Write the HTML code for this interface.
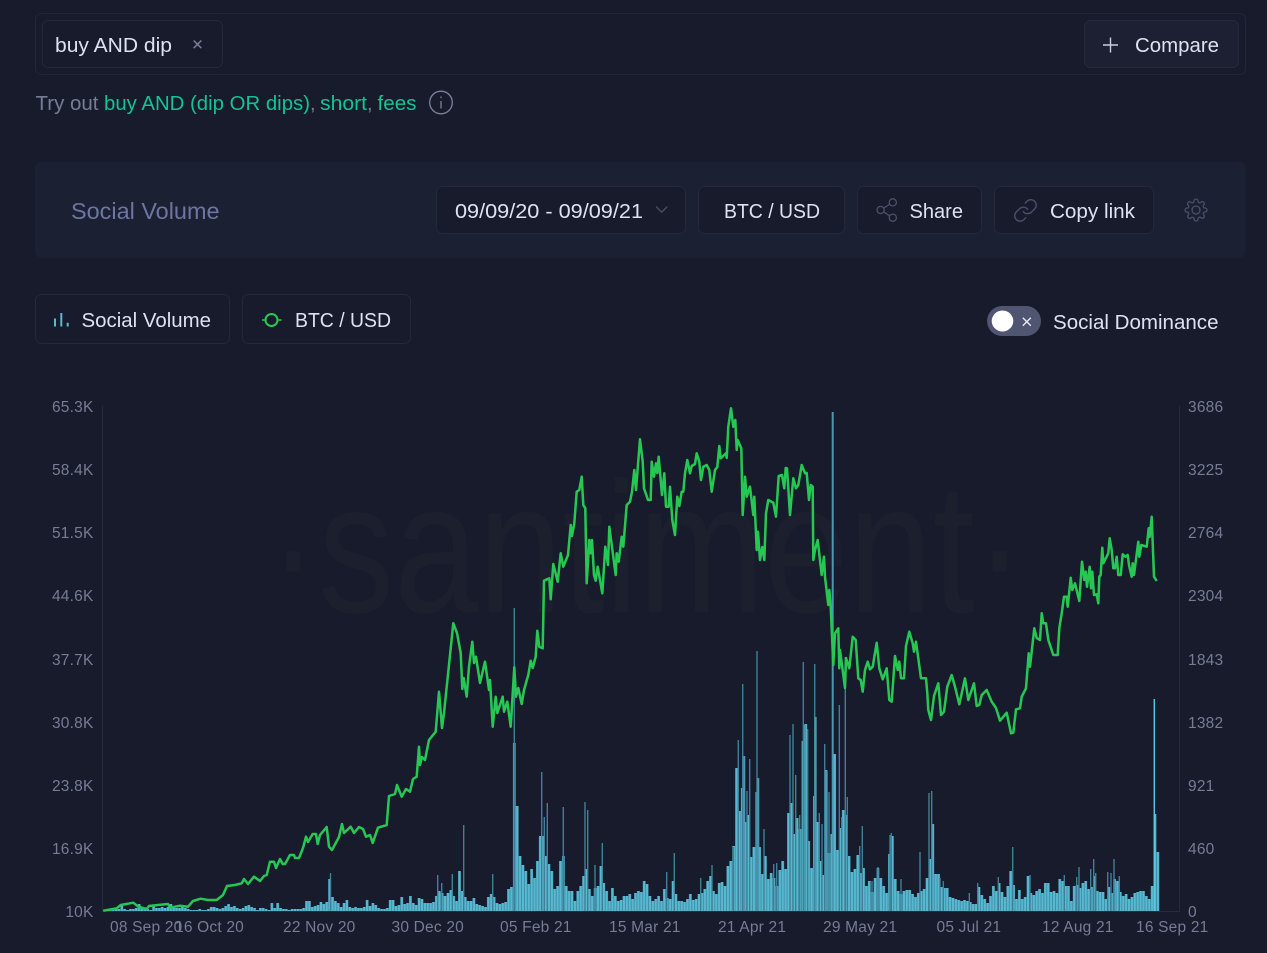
<!DOCTYPE html>
<html lang="en">
<head>
<meta charset="utf-8">
<title>Social Volume</title>
<style>
html,body{margin:0;padding:0;background:#181b2b;width:1267px;height:953px;overflow:hidden}
svg{display:block;position:absolute;left:0;top:0}
text{font-family:"Liberation Sans",Arial,sans-serif}
.t{font-size:20px;fill:#dde2f1}
.g{font-size:20px;fill:#767d97}
.j{font-size:20px;fill:#14c393}
.a{font-size:15.5px;fill:#767c95}
.box{fill:#181b2b;stroke:#24283b;stroke-width:1}
.ic{fill:none;stroke:#4b5069;stroke-width:1.3;stroke-linecap:round;stroke-linejoin:round}
</style>
</head>
<body>
<svg width="1267" height="953" viewBox="0 0 1267 953" xmlns="http://www.w3.org/2000/svg">
<rect width="1267" height="953" fill="#181b2b"/>

<!-- search -->
<rect x="35.5" y="13.5" width="1210" height="61" rx="6" fill="none" stroke="#222637"/>
<rect class="box" x="42.5" y="20.5" width="180" height="47" rx="6"/>
<text class="t" x="55" y="52" textLength="117" lengthAdjust="spacingAndGlyphs">buy AND dip</text>
<path d="M193.7 40.5l7.6 7.6M201.3 40.5l-7.6 7.6" fill="none" stroke="#7d829b" stroke-width="1.5"/>
<rect x="1084.5" y="20.5" width="154" height="47" rx="6" fill="#1c2032" stroke="#25293c"/>
<path d="M1103 45h15M1110.5 37.5v15" fill="none" stroke="#c9cee0" stroke-width="1.4"/>
<text class="t" x="1135" y="52" textLength="84" lengthAdjust="spacingAndGlyphs">Compare</text>

<text class="g" x="35.5" y="110" textLength="63" lengthAdjust="spacingAndGlyphs">Try out</text>
<text class="j" x="104" y="110" textLength="206" lengthAdjust="spacingAndGlyphs">buy AND (dip OR dips)</text>
<text class="g" x="310" y="110">,</text>
<text class="j" x="320" y="110" textLength="47" lengthAdjust="spacingAndGlyphs">short</text>
<text class="g" x="367" y="110">,</text>
<text class="j" x="377.5" y="110" textLength="39" lengthAdjust="spacingAndGlyphs">fees</text>
<circle cx="441" cy="102.5" r="11.3" fill="none" stroke="#7d829b" stroke-width="1.3"/>
<path d="M441 101v7.5M441 96.5v1.6" fill="none" stroke="#7d829b" stroke-width="1.3"/>

<!-- header card -->
<rect x="35" y="162" width="1210.5" height="95.5" rx="6" fill="#1c2033"/>
<text x="71" y="219" font-size="23" fill="#6c76a0" textLength="148.5" lengthAdjust="spacingAndGlyphs">Social Volume</text>
<rect class="box" x="436.5" y="186.5" width="249" height="47" rx="6"/>
<text class="t" x="455" y="218" textLength="188" lengthAdjust="spacingAndGlyphs">09/09/20 - 09/09/21</text>
<path d="M656.5 207l5.2 5.2 5.2-5.2" class="ic"/>
<rect class="box" x="698.5" y="186.5" width="146" height="47" rx="6"/>
<text class="t" x="724" y="218" textLength="96" lengthAdjust="spacingAndGlyphs">BTC / USD</text>
<rect class="box" x="857.5" y="186.5" width="124" height="47" rx="6"/>
<g class="ic">
<circle cx="892.8" cy="202.4" r="3.6"/><circle cx="880.6" cy="210" r="3.6"/><circle cx="892.8" cy="217.7" r="3.6"/>
<path d="M883.7 208.1l6-3.8M883.7 211.9l6 3.9"/>
</g>
<text class="t" x="909.5" y="218" textLength="53.5" lengthAdjust="spacingAndGlyphs">Share</text>
<rect class="box" x="994.5" y="186.5" width="159" height="47" rx="6"/>
<g class="ic" transform="translate(1012.5 197.5) scale(1.08)">
<path d="M10 13a5 5 0 0 0 7.54.54l3-3a5 5 0 0 0-7.07-7.07l-1.72 1.71"/>
<path d="M14 11a5 5 0 0 0-7.54-.54l-3 3a5 5 0 0 0 7.07 7.07l1.71-1.71"/>
</g>
<text class="t" x="1050" y="218" textLength="85" lengthAdjust="spacingAndGlyphs">Copy link</text>
<g class="ic" transform="translate(1184 198)">
<circle cx="12" cy="12" r="4"/>
<path d="M19.4 15a1.65 1.65 0 0 0 .33 1.82l.06.06a2 2 0 0 1 0 2.83 2 2 0 0 1-2.83 0l-.06-.06a1.65 1.65 0 0 0-1.82-.33 1.65 1.65 0 0 0-1 1.51V21a2 2 0 0 1-2 2 2 2 0 0 1-2-2v-.09A1.65 1.65 0 0 0 9 19.4a1.65 1.65 0 0 0-1.82.33l-.06.06a2 2 0 0 1-2.83 0 2 2 0 0 1 0-2.83l.06-.06a1.65 1.65 0 0 0 .33-1.82 1.65 1.65 0 0 0-1.51-1H3a2 2 0 0 1-2-2 2 2 0 0 1 2-2h.09A1.65 1.65 0 0 0 4.6 9a1.65 1.65 0 0 0-.33-1.82l-.06-.06a2 2 0 0 1 0-2.83 2 2 0 0 1 2.83 0l.06.06a1.65 1.65 0 0 0 1.82.33H9a1.65 1.65 0 0 0 1-1.51V3a2 2 0 0 1 2-2 2 2 0 0 1 2 2v.09a1.65 1.65 0 0 0 1 1.51 1.65 1.65 0 0 0 1.82-.33l.06-.06a2 2 0 0 1 2.83 0 2 2 0 0 1 0 2.83l-.06.06a1.65 1.65 0 0 0-.33 1.82V9a1.65 1.65 0 0 0 1.51 1H21a2 2 0 0 1 2 2 2 2 0 0 1-2 2h-.09a1.65 1.65 0 0 0-1.51 1z"/>
</g>

<!-- legend -->
<rect class="box" x="35.5" y="294.5" width="194" height="49" rx="6"/>
<path d="M55 326.5v-8M61.3 326.5v-13.5M67.7 326.5v-3.7" fill="none" stroke="#5cb9d1" stroke-width="2"/>
<text class="t" x="81.5" y="327" textLength="129.5" lengthAdjust="spacingAndGlyphs">Social Volume</text>
<rect class="box" x="242.5" y="294.5" width="168" height="49" rx="6"/>
<circle cx="271.5" cy="320" r="6" fill="none" stroke="#26c953" stroke-width="2"/>
<path d="M262 320h3.5M278 320h3.5" stroke="#26c953" stroke-width="1.6"/>
<text class="t" x="295" y="327" textLength="96" lengthAdjust="spacingAndGlyphs">BTC / USD</text>
<rect x="987" y="306" width="54" height="30" rx="15" fill="#505572"/>
<ellipse cx="1002.5" cy="321" rx="10.8" ry="10.5" fill="#fff"/>
<path d="M1022.8 317.7l8 8M1030.8 317.7l-8 8" fill="none" stroke="#e6e8f2" stroke-width="1.4"/>
<text class="t" x="1053" y="329" textLength="165.5" lengthAdjust="spacingAndGlyphs">Social Dominance</text>

<!-- watermark -->
<text x="268" y="612" font-size="186" fill="#1b1f2e" textLength="757" lengthAdjust="spacingAndGlyphs">·santiment·</text>

<!-- axes -->
<path d="M102.5 406V911.5H1179.5V406" fill="none" stroke="#272b3e"/>

<!-- bars -->
<defs>
<path id="b" d="M0 0v1M1 0v1M2 0v2M3 0v1M4 0v2M5 0v2M6 0v5M7 0v2M8 0v1M9 0v2M10 0v2M11 0v3M12 0v7M13 0v4M14 0v2M15 0v2M16 0v1M17 0v5M18 0v3M19 0v3M20 0v4M21 0v3M22 0v4M23 0v7M24 0v3M25 0v3M26 0v3M27 0v4M28 0v3M29 0v2M30 0v1M31 0v1M32 0v1M33 0v2M34 0v1M35 0v1M36 0v2M37 0v4M38 0v4M39 0v3M40 0v2M41 0v3M42 0v5M43 0v7M44 0v4M45 0v5M46 0v3M47 0v2M48 0v3M49 0v5M50 0v6M51 0v4M52 0v3M53 0v1M54 0v3M55 0v3M56 0v2M57 0v1M58 0v8M59 0v3M60 0v8M61 0v3M62 0v2M63 0v2M64 0v1M65 0v2M66 0v2M67 0v2M68 0v2M69 0v3M70 0v10M71 0v10M72 0v4M73 0v5M74 0v6M75 0v9M76 0v7M77 0v9M78 0v32M79 0v14M80 0v10M81 0v8M82 0v4M83 0v8M84 0v11M85 0v4M86 0v3M87 0v4M88 0v3M89 0v3M90 0v4M91 0v11M92 0v5M93 0v8M94 0v6M95 0v3M96 0v2M97 0v2M98 0v3M99 0v11M100 0v11M101 0v5M102 0v6M103 0v14M104 0v7M105 0v8M106 0v15M107 0v8M108 0v6M109 0v13M110 0v12M111 0v8M112 0v8M113 0v8M114 0v9M115 0v15M116 0v20M117 0v18M118 0v15M119 0v18M120 0v21M121 0v15M122 0v10M123 0v40M124 0v20M125 0v14M126 0v10M127 0v10M128 0v13M129 0v7M130 0v6M131 0v5M132 0v4M133 0v14M134 0v17M135 0v14M136 0v8M137 0v7M138 0v8M139 0v9M140 0v22M141 0v24M142 0v168M143 0v105M144 0v55M145 0v46M146 0v40M147 0v27M148 0v42M149 0v33M150 0v50M151 0v75M152 0v75M153 0v55M154 0v47M155 0v40M156 0v22M157 0v25M158 0v50M159 0v55M160 0v25M161 0v20M162 0v20M163 0v10M164 0v20M165 0v25M166 0v35M167 0v42M168 0v22M169 0v15M170 0v23M171 0v25M172 0v45M173 0v28M174 0v20M175 0v10M176 0v23M177 0v15M178 0v10M179 0v11M180 0v15M181 0v15M182 0v17M183 0v12M184 0v18M185 0v20M186 0v19M187 0v30M188 0v27M189 0v15M190 0v10M191 0v12M192 0v15M193 0v10M194 0v22M195 0v13M196 0v12M197 0v30M198 0v17M199 0v10M200 0v10M201 0v9M202 0v12M203 0v17M204 0v11M205 0v12M206 0v17M207 0v18M208 0v22M209 0v30M210 0v35M211 0v20M212 0v17M213 0v28M214 0v29M215 0v25M216 0v45M217 0v50M218 0v65M219 0v143M220 0v100M221 0v123M222 0v89M223 0v96M224 0v54M225 0v64M226 0v119M227 0v64M228 0v37M229 0v55M230 0v32M231 0v38M232 0v33M233 0v25M234 0v41M235 0v50M236 0v42M237 0v98M238 0v108M239 0v77M240 0v93M241 0v82M242 0v170M243 0v187M244 0v70M245 0v43M246 0v115M247 0v89M248 0v50M249 0v36M250 0v141M251 0v58M252 0v77M253 0v157M254 0v61M255 0v83M256 0v101M257 0v96M258 0v55M259 0v39M260 0v42M261 0v56M262 0v38M263 0v43M264 0v25M265 0v30M266 0v19M267 0v33M268 0v43M269 0v33M270 0v25M271 0v18M272 0v57M273 0v75M274 0v32M275 0v20M276 0v17M277 0v20M278 0v21M279 0v21M280 0v17M281 0v14M282 0v18M283 0v20M284 0v22M285 0v33M286 0v52M287 0v87M288 0v37M289 0v37M290 0v24M291 0v23M292 0v23M293 0v14M294 0v13M295 0v12M296 0v11M297 0v10M298 0v11M299 0v10M300 0v9M301 0v7M302 0v7M303 0v24M304 0v16M305 0v12M306 0v8M307 0v15M308 0v25M309 0v20M310 0v28M311 0v19M312 0v14M313 0v25M314 0v40M315 0v26M316 0v12M317 0v21M318 0v12M319 0v14M320 0v35M321 0v18M322 0v16M323 0v20M324 0v22M325 0v18M326 0v28M327 0v28M328 0v19M329 0v20M330 0v18M331 0v32M332 0v30M333 0v25M334 0v25M335 0v10M336 0v25M337 0v26M338 0v23M339 0v28M340 0v30M341 0v22M342 0v24M343 0v35M344 0v20M345 0v19M346 0v19M347 0v12M348 0v24M349 0v18M350 0v32M351 0v30M352 0v19M353 0v15M354 0v17M355 0v12M356 0v14M357 0v18M358 0v19M359 0v20M360 0v20M361 0v15M362 0v12M363 0v25M364 0v97M365 0v59"/>
</defs>
<g transform="translate(104.5 911) scale(2.886 -1)" fill="none">
<use href="#b" stroke="#3c8aa3" stroke-width="1"/>
<use href="#b" stroke="#58b8d0" stroke-width=".72"/>
</g>
<path fill="none" stroke="#3f8098" stroke-width="1.4" d="M330.5 911V873M437.7 911V875M441.7 911V883M452.3 911V874M463.7 911V825M492.7 911V874M514.3 911V608M541.7 911V772M544.3 911V817M547.3 911V803M563.3 911V807M585 911V802M587.7 911V810M595 911V865M602.3 911V843M666.7 911V872M674.3 911V853M700.7 911V878M712 911V865M733.3 911V847M738.3 911V740M742.7 911V684M747 911V791M749.7 911V759M757 911V651M764 911V829M773.7 911V864M776.7 911V863M790 911V735M793 911V724M795.7 911V775M799.7 911V815M803.3 911V662M807.7 911V729M814.7 911V664M819.3 911V813M822 911V824M824.7 911V744M829 911V792M839.3 911V705M841.7 911V817M845.3 911V657M847.3 911V797M859.7 911V846M862.3 911V826M872 911V881M878 911V867M890 911V835M891.3 911V833M901 911V879M920 911V852M929 911V793M931.7 911V791M940 911V878M943.3 911V881M969.3 911V893M977.7 911V883M998.3 911V877M1012.7 911V847M1030 911V875M1064.3 911V875M1076.7 911V877M1079 911V867M1090.7 911V869M1093.7 911V859M1095.7 911V873M1107.7 911V872M1111 911V873M1114 911V859M1119.3 911V876"/>
<path fill="none" stroke="#4a99b1" stroke-width="2" d="M744.3 911V756M758.3 911V778M805 911V725M815.7 911V717M826.7 911V771M832.7 911V412"/>
<path fill="none" stroke="#5ac8e0" stroke-width="1.4" d="M1154.3 911V699"/>

<!-- price line -->
<polyline fill="none" stroke="#26c853" stroke-width="2.5" stroke-linejoin="round" points="103.3,910.7 116.7,908.3 120.7,905 133.3,902.7 138.3,906.7 146.7,909 149,906 158,905 168,904 170,907.7 180,905.7 188,906.7 193,901 200.7,898.7 208,900 216.7,900 223,895 227,886 235,885 241.7,883.3 244,879 248,884 254,876.7 260,881 264,876 266.7,875 270,861.7 274,861.7 276,868 280,859 282.7,864 285,864 290,855 294,855 295,858 299,858 303,848 306,836.7 308,842 312.7,834 316,834 317.7,844 320,835 326.7,827 329,846.7 332,850 339,837 342,824 344,833 350.7,826.7 354,833 359,827 363,829 366,836.7 370,835 372.7,843 378,827.7 386.7,825 389,796 395,794 397,785 401.7,796.7 406,789 410,791.7 413,779 416.7,776.7 419,746.7 420,765 422,757 425,760 429,740 435.7,731.7 439,691.7 442,728 444,713 453.3,623.3 457,633 460.7,653 462.3,689 463.7,678 466.7,696.7 469,666.7 472.3,641.7 474,663 476,656.7 480,683 485,661.7 489,690 490,680 492.7,726.7 495.7,696.7 497.3,713 502.7,696.7 504,711.7 507.3,701.7 510.7,726.7 514.3,667.3 516,696.7 518.3,688 521.7,704 524,690 528.3,675 530.7,660.7 532.7,668 535.7,656.7 537.3,630.7 539.3,646.7 542.7,648.3 544,580.7 549.3,578.3 550.7,599.3 553.3,564 557.7,581.7 560.7,553.3 563.3,566.7 568,555 570.7,525 572,536 574.3,523.3 576.7,491.7 579.3,490 581.7,476.7 583.3,505 585.3,508.3 586.7,583.3 589.3,540 590.7,553.3 592,540 594,575 595.7,580.7 597.7,566.7 602.3,593.3 605.3,546.7 608,565 609.3,526.7 615.7,575 616.7,553.3 618.7,561.7 621.7,536.7 623.3,546.7 626.7,505 630,501.7 632,491.7 634.3,470 636,490 640,439.3 642.7,461.7 644,488.3 648,500 650.7,500 651.7,461.7 654,476.7 656,463.3 657.3,473 658.7,456.7 662,495 664.3,473.3 666,506.7 668.7,506.7 670,486.7 672.3,520 675,535 677.3,496.7 679.3,506 681.7,491.7 683.3,491.7 685,473.3 687.3,460 690,473.3 691.7,466 695,464 696.7,453.3 699.3,461.7 701,480 703.3,466.7 706.7,465 709.3,470 711.7,491.7 715,470 717.3,467 719.3,446 720.7,458.3 726,453.3 726.7,458 728.3,426.7 731,408.3 733.3,426.7 735.3,420 736.7,450 737.7,440 741.3,448.3 742.7,515 745,476.7 746.7,496.7 750,486.7 753.3,515 754.3,496.7 756.7,550 758,531.7 760,560 762.3,547 764.3,560 766,513.3 768.3,500 773.3,502.7 776,516.7 778.7,476 782,475 784.3,488.3 785.7,468 787,468.3 790,515 793.3,478.3 796,488.3 798.3,485 801.7,465 805,473.3 806.7,473 809,500 810.7,485 812.7,486.7 813.3,560 815,550 817.7,540 821.7,575 824,556.7 825,577 828.3,605 829.3,590 830.7,606.7 833.3,665 835,633.3 838.3,628.3 839.3,668.3 840,650 845,688 846,658 849.3,668.3 852.7,636.7 855.7,640 858.3,678.3 860.7,680 862.7,691.7 865,670 867.7,661.7 870,669.3 872.7,666.7 876.7,642.7 879.3,668.3 882.7,679.3 886.7,668.3 889.3,700 891.7,701.7 895,656 897.7,670 899.3,661.7 901,678.3 904,678.3 906,646 909.3,631.7 912.7,643.3 914,651.7 916,641.7 918.3,658.3 921,678.3 926,678.3 927.3,693 928.3,710 931,720 934,696 938.3,683.3 941,715 944,711.7 947.3,686.7 951.7,675 955,686.7 959.3,704.3 965,678.3 968.3,700 974,683.3 976.7,706 979.3,705 981.7,695 986.7,690 991.7,701.7 996,708 1000,720.7 1006.7,712.7 1011,733.3 1013.3,732.7 1016,709.3 1020,708.3 1021.7,696.7 1026,688.3 1028.7,653.3 1030,666.7 1034.3,628.3 1036.7,638 1040,640 1041.7,613.3 1043.3,623.3 1046,623.3 1048.3,640 1053.3,655 1057.7,655 1059.3,628.3 1061.7,613.3 1064,596.7 1066.7,596.7 1067.7,606.7 1070.7,577.7 1072.3,590 1075,583.3 1079.3,601 1082,561.7 1084.3,580 1085.7,571.7 1087,586.7 1089.7,566.7 1091,588.3 1092.3,571.7 1094,595 1096.7,594.3 1098.3,603.3 1099.3,576.7 1100.7,575 1102.3,547.7 1103.3,563.3 1108.3,553.3 1109.7,538.3 1111.7,550 1113.3,568.3 1115,568.3 1116.7,556.7 1118.3,575 1120.7,575 1122.7,554.3 1125.3,556.7 1127.7,555 1129,565 1131.7,576.7 1132.7,563.3 1134,575 1138.3,541.7 1139.3,556.7 1141.3,545 1146.7,546.7 1148.7,528.3 1149.7,536.7 1151.7,516.7 1154,576.7 1156.7,581"/>

<!-- axis labels -->
<g class="a" text-anchor="end" letter-spacing=".2">
<text class="a" x="93.5" y="412">65.3K</text>
<text class="a" x="93.5" y="475">58.4K</text>
<text class="a" x="93.5" y="538">51.5K</text>
<text class="a" x="93.5" y="601">44.6K</text>
<text class="a" x="93.5" y="665">37.7K</text>
<text class="a" x="93.5" y="728">30.8K</text>
<text class="a" x="93.5" y="791">23.8K</text>
<text class="a" x="93.5" y="854">16.9K</text>
<text class="a" x="93.5" y="917">10K</text>
</g>
<g letter-spacing=".2">
<text class="a" x="1188" y="412">3686</text>
<text class="a" x="1188" y="475">3225</text>
<text class="a" x="1188" y="538">2764</text>
<text class="a" x="1188" y="601">2304</text>
<text class="a" x="1188" y="665">1843</text>
<text class="a" x="1188" y="728">1382</text>
<text class="a" x="1188" y="791">921</text>
<text class="a" x="1188" y="854">460</text>
<text class="a" x="1188" y="917">0</text>
<text class="a" x="110" y="932">08 Sep 20</text>
<text class="a" x="175" y="932">16 Oct 20</text>
<text class="a" x="283" y="932">22 Nov 20</text>
<text class="a" x="391.5" y="932">30 Dec 20</text>
<text class="a" x="500" y="932">05 Feb 21</text>
<text class="a" x="609" y="932">15 Mar 21</text>
<text class="a" x="718" y="932">21 Apr 21</text>
<text class="a" x="823" y="932">29 May 21</text>
<text class="a" x="936.5" y="932">05 Jul 21</text>
<text class="a" x="1042" y="932">12 Aug 21</text>
<text class="a" x="1136" y="932">16 Sep 21</text>
</g>
</svg>
</body>
</html>
